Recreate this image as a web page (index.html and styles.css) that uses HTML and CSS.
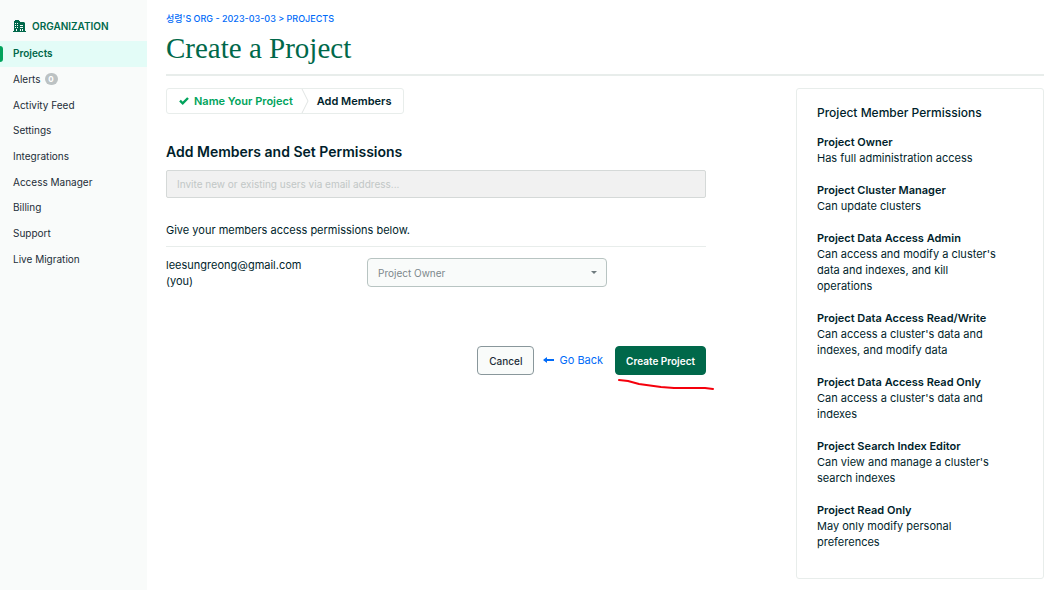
FILE: index.html
```html
<!DOCTYPE html>
<html lang="en">
<head>
    <meta charset="utf-8">
    <title>Create a Project</title>
    <link rel="stylesheet" href="styles.css">
</head>
<body>
    <div class="layout">
        <nav class="sidebar">
            <div class="sidebar-header">
                <svg class="org-icon" width="13" height="12" viewBox="0 0 13 12">
                    <path fill="#00684a" fill-rule="evenodd" d="M0 12v-1h1V1h1V0h4v1h1v10h1V9H7V8h3V7H7V6h3V5H7V2h4l1 1v8h1v1zM2 3v1h1V3zm2 0v1h1V3zM2 5v1h1V5zm2 0v1h1V5zM2 7v1h1V7zm2 0v1h1V7zM3 9v2h1V9zM9 9v2h1V9z"/>
                </svg>
                <span>ORGANIZATION</span>
            </div>
            <ul class="nav-list">
                <li><a class="active" href="#">Projects</a></li>
                <li><a href="#">Alerts <span class="badge">0</span></a></li>
                <li><a href="#">Activity Feed</a></li>
                <li><a href="#">Settings</a></li>
                <li><a href="#">Integrations</a></li>
                <li><a href="#">Access Manager</a></li>
                <li><a href="#">Billing</a></li>
                <li><a href="#">Support</a></li>
                <li><a href="#">Live Migration</a></li>
            </ul>
        </nav>

        <main class="main">
            <header class="page-header">
                <a class="breadcrumb" href="#">성령'S ORG - 2023-03-03 &gt; PROJECTS</a>
                <h1>Create a Project</h1>
            </header>

            <div class="columns">
                <form class="content">
                    <ol class="steps">
                        <li class="step done">
                            <svg width="10" height="8" viewBox="0 0 10 8">
                                <path fill="none" stroke="#00a35c" stroke-width="2.4" d="M1 3.7l2.7 2.6L9 1"/>
                            </svg>
                            Name Your Project
                        </li>
                        <li class="step-divider">
                            <svg width="8" height="24" viewBox="0 0 8 24">
                                <path fill="none" stroke="#e0e4e3" d="M1 0l6 12-6 12"/>
                            </svg>
                        </li>
                        <li class="step">Add Members</li>
                    </ol>

                    <h2><label for="invite">Add Members and Set Permissions</label></h2>
                    <input class="invite" type="text" id="invite" placeholder="Invite new or existing users via email address..." disabled>

                    <p class="hint">Give your members access permissions below.</p>

                    <div class="member">
                        <label class="member-name" for="role">leesungreong@gmail.com<br>(you)</label>
                        <div class="select-wrap">
                            <select id="role" disabled>
                                <option>Project Owner</option>
                            </select>
                            <svg class="caret" width="6" height="3" viewBox="0 0 6 3">
                                <path fill="#6f7b7e" d="M0 0h6L3 3z"/>
                            </svg>
                        </div>
                    </div>

                    <div class="actions">
                        <button class="button" type="button">Cancel</button>
                        <a class="back" href="#">
                            <svg width="11" height="6" viewBox="0 0 11 6">
                                <path fill="#016bf8" d="M0 3l4-3v2h7v2H4v2z"/>
                            </svg>
                            Go Back
                        </a>
                        <button class="button primary" type="submit">Create Project</button>
                        <svg class="underline" width="98" height="13" viewBox="0 0 98 13">
                            <path fill="none" stroke="#f5000c" stroke-width="2" stroke-linecap="round" stroke-linejoin="round" d="M2 2l9 1 11 3 22 3 13 1h31l8 1"/>
                        </svg>
                    </div>
                </form>

                <aside class="permissions">
                    <h3>Project Member Permissions</h3>
                    <dl>
                        <dt>Project Owner</dt>
                        <dd>Has full administration access</dd>
                        <dt>Project Cluster Manager</dt>
                        <dd>Can update clusters</dd>
                        <dt>Project Data Access Admin</dt>
                        <dd>Can access and modify a cluster's data and indexes, and kill operations</dd>
                        <dt>Project Data Access Read/Write</dt>
                        <dd>Can access a cluster's data and indexes, and modify data</dd>
                        <dt>Project Data Access Read Only</dt>
                        <dd>Can access a cluster's data and indexes</dd>
                        <dt>Project Search Index Editor</dt>
                        <dd>Can view and manage a cluster's search indexes</dd>
                        <dt>Project Read Only</dt>
                        <dd>May only modify personal preferences</dd>
                    </dl>
                </aside>
            </div>
        </main>
    </div>
</body>
</html>
```
FILE: styles.css
```css
* {
    box-sizing: border-box;
}

body {
    margin: 0;
    font-family: Inter, "Noto Sans CJK KR", sans-serif;
    font-size: 11px;
    line-height: 16px;
    color: #001e2b;
    background: #fff;
}

a {
    color: inherit;
    text-decoration: none;
}

ul,
ol {
    margin: 0;
    padding: 0;
    list-style: none;
}

.layout {
    display: flex;
    min-height: 100vh;
}

/* sidebar */
.sidebar {
    flex: 0 0 147px;
    background: #f9fbfa;
}

.sidebar-header {
    display: flex;
    align-items: center;
    gap: 6px;
    padding: 18px 13px 7px;
    font-size: 10px;
    font-weight: 600;
    color: #00684a;
}

.nav-list {
    display: grid;
    grid-auto-rows: 1fr;
    height: 231px;
}

.nav-list a {
    display: flex;
    align-items: center;
    gap: 4px;
    height: 100%;
    padding: 0 0 1px 13px;
    font-size: 10px;
    color: #1c2d38;
}

.nav-list .active {
    position: relative;
    font-weight: 600;
    color: #00684a;
    background: #e3fcf7;
}

.active::before {
    content: "";
    position: absolute;
    left: 0;
    top: 5px;
    bottom: 5px;
    width: 3px;
    border-radius: 0 3px 3px 0;
    background: #00a35c;
}

.badge {
    width: 13px;
    border-radius: 6px;
    font-size: 8px;
    font-weight: 700;
    line-height: 12px;
    text-align: center;
    color: #fff;
    background: #bcc2c3;
}

/* page */
.main {
    flex: 1;
    min-width: 0;
    padding: 11px 3px 11px 19px;
}

.page-header {
    padding-bottom: 9px;
    border-bottom: 2px solid #e8edeb;
}

.breadcrumb {
    display: block;
    font-size: 9px;
    font-weight: 500;
    color: #016bf8;
}

h1 {
    margin: 4px 0 0;
    font-family: "Liberation Serif", serif;
    font-size: 29px;
    font-weight: 400;
    line-height: 34px;
    color: #00684a;
}

.columns {
    display: flex;
    justify-content: space-between;
    align-items: flex-start;
    gap: 24px;
    padding-top: 12px;
}

.content {
    flex: 0 1 540px;
}

.steps {
    display: inline-flex;
    align-items: center;
    gap: 8px;
    padding: 0 12px;
    border: 1px solid #e8edeb;
    border-radius: 3px;
    font-weight: 600;
}

.step {
    display: flex;
    align-items: center;
    gap: 5px;
}

.done {
    color: #00a35c;
}

.step-divider {
    height: 24px;
}

h2 {
    margin: 28px 0 8px;
    font-size: 14px;
    font-weight: 600;
    line-height: 20px;
}

.invite {
    display: block;
    width: 100%;
    height: 28px;
    padding: 0 10px;
    border: 1px solid #d5d9d8;
    border-radius: 2px;
    font: inherit;
    font-size: 10px;
    background: #f1f1f1;
}

.invite::placeholder {
    color: #c1c7c6;
}

.hint {
    margin: 24px 0 0;
    padding-bottom: 8px;
    border-bottom: 1px solid #e8edeb;
}

.member {
    display: flex;
    padding-top: 10px;
}

.member-name {
    flex: 0 0 201px;
}

.select-wrap {
    position: relative;
    flex: 0 1 240px;
    margin-top: 1px;
}

select {
    display: block;
    width: 100%;
    height: 29px;
    padding: 0 10px;
    border: 1px solid #b8c4c2;
    border-radius: 4px;
    font: inherit;
    font-size: 10px;
    color: #7c888c;
    background: #f9fbfa;
    opacity: 1;
    appearance: none;
}

.caret {
    position: absolute;
    top: 13px;
    right: 10px;
}

.actions {
    position: relative;
    display: flex;
    justify-content: flex-end;
    padding-top: 57px;
}

.button {
    height: 29px;
    padding: 0 11px;
    border: 1px solid #89979b;
    border-radius: 4px;
    font: inherit;
    font-size: 10px;
    font-weight: 500;
    color: #1c2d38;
    background: #f9fbfa;
}

.primary {
    padding: 0 10px;
    border-color: #00684a;
    font-weight: 600;
    color: #fff;
    background: #00684a;
}

.back {
    display: flex;
    align-items: center;
    gap: 5px;
    margin: 0 12px 0 9px;
    padding-bottom: 2px;
    color: #016bf8;
}

/* hand-drawn mark under the submit button */
.underline {
    position: absolute;
    top: 89px;
    right: -9px;
}

/* permissions panel */
.permissions {
    flex: 0 0 248px;
    padding: 16px 40px 28px 20px;
    border: 1px solid #e8edeb;
    border-radius: 3px;
}

h3 {
    margin: 0;
    font-size: 12px;
    font-weight: 500;
}

dl {
    margin: 0;
}

dt {
    margin-top: 16px;
    font-weight: 600;
}

dt:first-child {
    margin-top: 13px;
}

dd {
    margin: 0;
}
```
